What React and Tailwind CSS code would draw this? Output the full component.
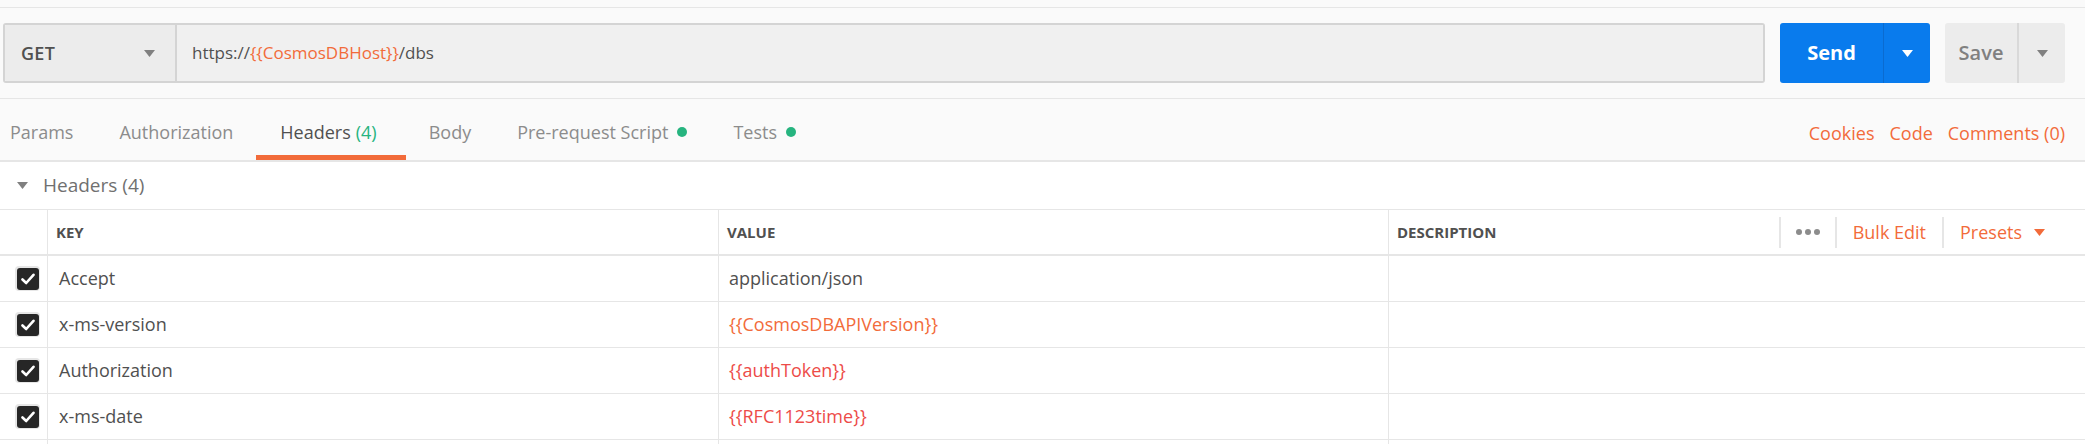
import React from "react";

const tabs = [
  { label: "Params" },
  { label: "Authorization" },
  { label: "Headers", count: "(4)", active: true },
  { label: "Body" },
  { label: "Pre-request Script", dot: true },
  { label: "Tests", dot: true },
];

const rows = [
  { key: "Accept", value: "application/json", tone: "plain" },
  { key: "x-ms-version", value: "{{CosmosDBAPIVersion}}", tone: "var" },
  { key: "Authorization", value: "{{authToken}}", tone: "missing" },
  { key: "x-ms-date", value: "{{RFC1123time}}", tone: "missing" },
];

function Caret({ className = "", color = "#808080" }) {
  return (
    <svg width="11" height="7" viewBox="0 0 11 7" className={className}>
      <polygon points="0,0 11,0 5.5,7" fill={color} />
    </svg>
  );
}

function CheckBox() {
  return (
    <div className="w-[25px] h-[25px] rounded-[4px] bg-[#e6e6e6] flex items-center justify-center">
      <div className="w-[22px] h-[22px] rounded-[3px] bg-[#262626] flex items-center justify-center">
        <svg width="14" height="12" viewBox="0 0 14 12">
          <path d="M1.5 6.5 L5.2 10 L12.5 1.8" fill="none" stroke="#fff" strokeWidth="2.6" strokeLinecap="round" strokeLinejoin="round" />
        </svg>
      </div>
    </div>
  );
}

export default function App() {
  return (
    <div className="w-[2085px] h-[444px] overflow-hidden bg-white font-['Open_Sans',sans-serif] text-[#505050]">
      {/* strip above the request bar */}
      <div className="h-[8px] bg-[#fafafa] border-b border-[#e6e6e6]" />

      {/* request bar */}
      <div className="h-[91px] bg-[#fafafa] border-b border-[#e6e6e6] flex items-start pt-[15px] pl-[3px] pr-[20px]">
        <div className="flex-1 h-[60px] flex rounded-[3px] border-2 border-[#d4d4d4] overflow-hidden">
          <div className="w-[172px] bg-[#ececec] border-r-2 border-[#d4d4d4] flex items-center pl-[16px] pr-[20px]">
            <span className="text-[18px] font-semibold text-[#505050] tracking-[0.3px]">GET</span>
            <Caret className="ml-auto" />
          </div>
          <div className="flex-1 bg-[#f0f0f0] flex items-center pl-[15px] text-[17px] text-[#505050]">
            https://<span className="text-[#f26b3a]">{"{{CosmosDBHost}}"}</span>/dbs
          </div>
        </div>
        <div className="ml-[15px] w-[150px] h-[60px] rounded-[3px] bg-[#097bed] flex">
          <div className="w-[104px] flex items-center justify-center text-white text-[20px] font-bold border-r border-[#0a6bd0]">
            Send
          </div>
          <div className="flex-1 flex items-center justify-center">
            <Caret color="#ffffff" />
          </div>
        </div>
        <div className="ml-[15px] w-[120px] h-[60px] rounded-[3px] bg-[#ececec] flex">
          <div className="w-[74px] flex items-center justify-center text-[#808080] text-[20px] font-semibold border-r-2 border-[#d9d9d9]">
            Save
          </div>
          <div className="flex-1 flex items-center justify-center">
            <Caret />
          </div>
        </div>
      </div>

      {/* tabs */}
      <div className="h-[63px] bg-[#fafafa] border-b-2 border-[#e6e6e6] flex items-stretch pr-[20px]">
        <div className="flex items-stretch -ml-[13px]">
          {tabs.map((t) => (
            <div
              key={t.label}
              className={
                "pt-[10px] flex items-center text-[18px] border-b-[5px] " +
                (t.active
                  ? "pl-[24px] pr-[29px] border-[#f26b3a] text-[#505050]"
                  : "px-[23px] border-transparent text-[#8c8c8c]")
              }
            >
              {t.label}
              {t.count && <span className="ml-[5px] text-[#26b47f]">{t.count}</span>}
              {t.dot && <span className="ml-[9px] w-[10px] h-[10px] rounded-full bg-[#26b47f]" />}
            </div>
          ))}
        </div>
        <div className="ml-auto flex items-center pt-[8px] gap-[15px] text-[18px] text-[#f26b3a]">
          <span>Cookies</span>
          <span>Code</span>
          <span>Comments (0)</span>
        </div>
      </div>

      {/* headers section */}
      <div className="h-[47px] flex items-center pl-[17px] text-[19px] text-[#707070]">
        <Caret className="mr-[15px]" />
        Headers (4)
      </div>

      <div className="border-t border-[#e6e6e6]">
        {/* header row */}
        <div className="h-[46px] flex border-b-2 border-[#e6e6e6] text-[15px] font-bold text-[#505050] uppercase">
          <div className="w-[48px] border-r border-[#e6e6e6]" />
          <div className="w-[671px] border-r border-[#e6e6e6] flex items-center pl-[8px]">Key</div>
          <div className="w-[670px] border-r border-[#e6e6e6] flex items-center pl-[8px]">Value</div>
          <div className="flex-1 flex items-center pl-[8px] pr-[40px]">
            Description
            <div className="ml-auto flex items-center h-[31px] normal-case font-normal text-[18px]">
              <div className="h-full border-l-2 border-[#e6e6e6]" />
              <div className="flex items-center gap-[3px] px-[15px]">
                <span className="w-[6px] h-[6px] rounded-full bg-[#8c8c8c]" />
                <span className="w-[6px] h-[6px] rounded-full bg-[#8c8c8c]" />
                <span className="w-[6px] h-[6px] rounded-full bg-[#8c8c8c]" />
              </div>
              <div className="h-full border-l-2 border-[#e6e6e6]" />
              <span className="px-[16px] text-[#f26b3a]">Bulk Edit</span>
              <div className="h-full border-l-2 border-[#e6e6e6]" />
              <span className="pl-[16px] text-[#f26b3a]">Presets</span>
              <Caret className="ml-[12px]" color="#f26b3a" />
            </div>
          </div>
        </div>

        {/* rows */}
        {rows.map((r) => (
          <div key={r.key} className="h-[46px] flex border-b border-[#e6e6e6] text-[18px]">
            <div className="w-[48px] border-r border-[#e6e6e6] flex items-center pl-[15px]">
              <CheckBox />
            </div>
            <div className="w-[671px] border-r border-[#e6e6e6] flex items-center pl-[11px] text-[#505050]">{r.key}</div>
            <div
              className={
                "w-[670px] border-r border-[#e6e6e6] flex items-center pl-[10px] " +
                (r.tone === "plain" ? "text-[#505050]" : r.tone === "var" ? "text-[#f26b3a]" : "text-[#ed4b48]")
              }
            >
              {r.value}
            </div>
            <div className="flex-1" />
          </div>
        ))}
        <div className="h-[46px] flex">
          <div className="w-[48px] border-r border-[#e6e6e6]" />
          <div className="w-[671px] border-r border-[#e6e6e6]" />
          <div className="w-[670px] border-r border-[#e6e6e6]" />
        </div>
      </div>
    </div>
  );
}
